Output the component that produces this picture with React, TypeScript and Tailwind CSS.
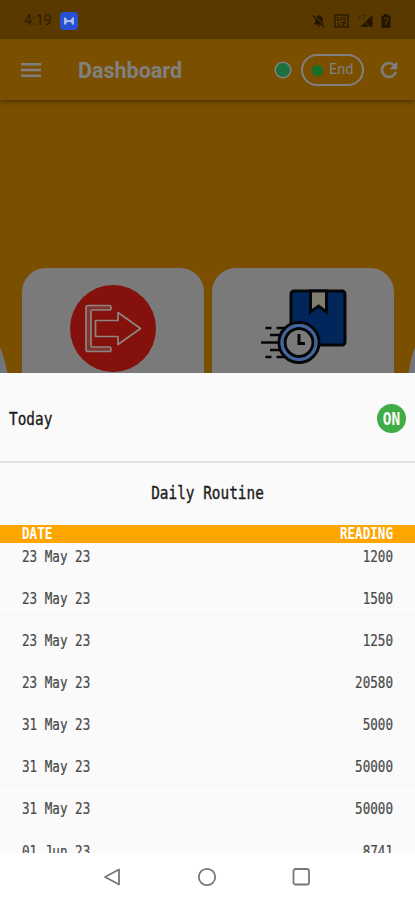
import type { ReactNode } from "react";

const readings = [
  { date: "23 May 23", value: "1200" },
  { date: "23 May 23", value: "1500" },
  { date: "23 May 23", value: "1250" },
  { date: "23 May 23", value: "20580" },
  { date: "31 May 23", value: "5000" },
  { date: "31 May 23", value: "50000" },
  { date: "31 May 23", value: "50000" },
  { date: "01 Jun 23", value: "8741" },
];

function StatusBar() {
  return (
    <div className="flex h-[39px] items-center bg-[#593900] pr-[24px] pl-[24px] pt-[2px]">
      <span className="w-[36px] text-[14px] tracking-[0.2px] text-[#2b1c00]">4:19</span>
      <svg width="18" height="18" viewBox="0 0 18 18">
        <rect width="18" height="18" rx="4" fill="#2750d2" />
        <path d="M4 6.300q0-1 1-1t1.300 1.200L7.500 8h3l1.200-1.500q.3-1.200 1.300-1.200t1 1v5.400q0 1-1 1t-1.300-1.200L10.500 10h-3l-1.200 1.500q-.3 1.200-1.300 1.200t-1-1z" fill="#a9bbea" />
      </svg>
      <div className="ml-auto flex items-center gap-[8px] text-[#241700]">
        <svg width="14" height="14" viewBox="0 0 14 14">
          <path
            d="M7 1c.6 0 1 .4 1 1 1.700.4 2.800 1.900 2.800 3.800v2.700L12.300 10.500H1.700L3.200 8.500V5.800C3.200 3.900 4.300 2.400 6 2c0-.6.4-1 1-1zM5.700 11.300h2.600c0 1.700-2.600 1.700-2.600 0z"
            fill="currentColor"
          />
          <path d="M1.800 1L13 13" stroke="#593900" strokeWidth="1.600" />
          <path d="M1 1.500L12 13" stroke="currentColor" strokeWidth="1.200" />
        </svg>
        <svg width="15" height="14" viewBox="0 0 15 14" fill="none" stroke="currentColor" strokeWidth="1.200">
          <rect x="1" y="1" width="13" height="12" />
          <path d="M3.500 3v3l2 1M7 3v3M9 3.500h3M9 6h3M4 9l2 3M7.500 8.500h4M8 11.500l3-2.500" />
        </svg>
        <svg width="16" height="14" viewBox="0 0 16 14">
          <path d="M15.500 1v12H3z" fill="currentColor" />
          <path d="M1 2h3M1 4h2.500M6 1.500h3M6 4h2" stroke="currentColor" strokeWidth="1" opacity="0.5" />
          <path d="M8 8l5 5" stroke="#593900" strokeWidth="0.800" />
        </svg>
        <svg width="10" height="14" viewBox="0 0 10 14">
          <path d="M3 0h4v1.500h1.500q1 0 1 1V13q0 .8-1 .8h-7q-1 0-1-.8V2.500q0-1 1-1H3z" fill="currentColor" />
          <path d="M3.300 5.500q0-1.500 1.700-1.500t1.700 1.500q0 1-1.200 2.300L4 11" stroke="#593900" strokeWidth="1.100" fill="none" />
        </svg>
      </div>
    </div>
  );
}

function AppBar() {
  return (
    <div className="flex h-[61px] items-center bg-[#7a4f00] pl-[21px] pr-[14px] pt-[1px] text-[#808080] shadow-[0_2px_4px_rgba(0,0,0,0.35)]">
      <svg width="20" height="14" viewBox="0 0 20 14" stroke="currentColor" strokeWidth="2.400">
        <path d="M0 1.200h20M0 7h20M0 12.800h20" />
      </svg>
      <h1 className="ml-[37px] pt-[2px] text-[21.500px] font-bold">Dashboard</h1>
      <svg className="ml-auto" width="18" height="18" viewBox="0 0 18 18">
        <circle cx="9" cy="9" r="7.800" fill="#1c7040" stroke="currentColor" strokeWidth="1.500" />
      </svg>
      <button className="ml-[9px] flex h-[32px] w-[63px] items-center rounded-full border-2 border-[#808080] pl-[9px]">
        <span className="size-[11px] rounded-full bg-[#147028]" />
        <span className="ml-[6px] text-[14.500px]">End</span>
      </button>
      <svg className="ml-[13px]" width="24" height="24" viewBox="0 0 24 24">
        <path
          d="M17.650 6.350A7.960 7.960 0 0 0 12 4a8 8 0 1 0 7.730 10h-2.080A6 6 0 1 1 12 6c1.660 0 3.140.69 4.220 1.780L13 11h7V4z"
          fill="currentColor"
          stroke="currentColor"
          strokeWidth="0.600"
        />
      </svg>
    </div>
  );
}

function LogoutIcon() {
  return (
    <svg width="86" height="87" viewBox="0 0 86 87" fill="none">
      <ellipse cx="43" cy="43.500" rx="43" ry="43.500" fill="#84110c" />
      <g stroke="#8d8583" strokeWidth="1.700" strokeLinejoin="round">
        <path d="M39.500 20.500H18q-2 0-2 2v42q0 2 2 2h21.500q1.500 0 1.500-2.300t-1.500-2.200H22.500q-1.500 0-1.500-1.500v-34q0-1.500 1.500-1.500h17q1.500 0 1.500-2.300t-1.500-2.200z" fill="#84342f" />
        <path d="M25.500 35.500H48v-8l22.500 16L48 59.500v-8H25.500z" />
      </g>
    </svg>
  );
}

function DeliveryIcon() {
  return (
    <svg width="88" height="76" viewBox="0 0 88 76" fill="none" stroke="#050608" strokeWidth="3">
      <rect x="31" y="2" width="54" height="54" rx="3" fill="#00265c" />
      <path d="M50.500 2v21l8-6 8 6V2z" fill="#807d70" />
      <g strokeWidth="2.400">
        <path d="M5.500 39h6M16.500 39h12M10 46h14M1 53.500h18M10 61h14M5.500 68h6M16.500 68h12" />
      </g>
      <circle cx="39" cy="53.500" r="17.500" stroke="#43659a" strokeWidth="5" />
      <circle cx="39" cy="53.500" r="20" />
      <circle cx="39" cy="53.500" r="14" fill="#7a7a7a" />
      <circle cx="39" cy="53.500" r="17" stroke="#43659a" />
      <path d="M39 45v9.500h6" />
    </svg>
  );
}

function Card({ children }: { children: ReactNode }) {
  return (
    <div className="flex h-[105px] w-[182px] justify-center rounded-t-[24px] bg-[#7a7a7a]">
      {children}
    </div>
  );
}

function ReadingList() {
  return (
    <ul className="h-[310px] overflow-hidden text-[12.600px] text-[#4a4a4a] [-webkit-text-stroke:0.2px]">
      {readings.map((r, i) => (
        <li
          key={i}
          className="flex h-[42.150px] items-end justify-between border-b border-[#f5f5f5] px-[22px] pb-[6.500px] first:h-[31px]"
        >
          <span className="scale-y-120">{r.date}</span>
          <span className="scale-y-120">{r.value}</span>
        </li>
      ))}
    </ul>
  );
}

function RoutineSheet() {
  return (
    <section className="h-[480px] bg-[#fafafa] font-['DejaVu_Sans_Mono',monospace]">
      <div className="flex h-[90px] items-center justify-between border-b-2 border-[#e0e0e0] pl-[9px] pr-[9px] pt-[3px] text-[14.400px]">
        <span className="scale-y-120 pt-[3px] text-[#1c1c1c] [-webkit-text-stroke:0.3px]">Today</span>
        <span className="flex size-[29px] items-center justify-center rounded-full bg-[#3fac46] pt-[2px] font-bold text-white">
          <span className="scale-y-120">ON</span>
        </span>
      </div>
      <h2 className="flex h-[62px] items-center justify-center text-[14.400px] text-[#1c1c1c] [-webkit-text-stroke:0.3px]">
        <span className="scale-y-120">Daily Routine</span>
      </h2>
      <div className="flex h-[18px] items-center justify-between bg-[#ffa500] px-[22px] pt-[1px] text-[12.600px] font-bold text-white">
        <span className="scale-y-120">DATE</span>
        <span className="scale-y-120">READING</span>
      </div>
      <ReadingList />
    </section>
  );
}

function NavBar() {
  return (
    <nav className="flex h-[47px] items-center justify-center gap-[75px] bg-white pr-[2px]">
      <svg width="20" height="20" viewBox="0 0 20 20" fill="none" stroke="#777" strokeWidth="1.800" strokeLinejoin="round">
        <path d="M17 2.500v15L3 10z" />
      </svg>
      <svg width="20" height="20" viewBox="0 0 20 20" fill="none" stroke="#777" strokeWidth="1.800">
        <circle cx="10" cy="10" r="8.200" />
      </svg>
      <svg width="20" height="20" viewBox="0 0 20 20" fill="none" stroke="#777" strokeWidth="1.800">
        <rect x="1.500" y="2" width="15.500" height="15.500" rx="2" />
      </svg>
    </nav>
  );
}

export default function App() {
  return (
    <div className="flex h-[900px] w-[415px] flex-col overflow-hidden bg-[#7a4f00] font-[Roboto,sans-serif]">
      <StatusBar />
      <AppBar />
      <main className="flex h-[273px] items-end justify-between">
        <svg width="8" height="26" viewBox="0 0 8 26">
          <path d="M0 0Q4 10 7.500 26H0z" fill="#73757d" />
        </svg>
        <div className="flex gap-[8px]">
          <Card>
            <div className="pt-[17px]">
              <LogoutIcon />
            </div>
          </Card>
          <Card>
            <div className="pt-[21px] pl-[2px]">
              <DeliveryIcon />
            </div>
          </Card>
        </div>
        <svg width="8" height="26" viewBox="0 0 8 26">
          <path d="M8 0Q4 10 1.500 26H8z" fill="#73757d" />
        </svg>
      </main>
      <RoutineSheet />
      <NavBar />
    </div>
  );
}
